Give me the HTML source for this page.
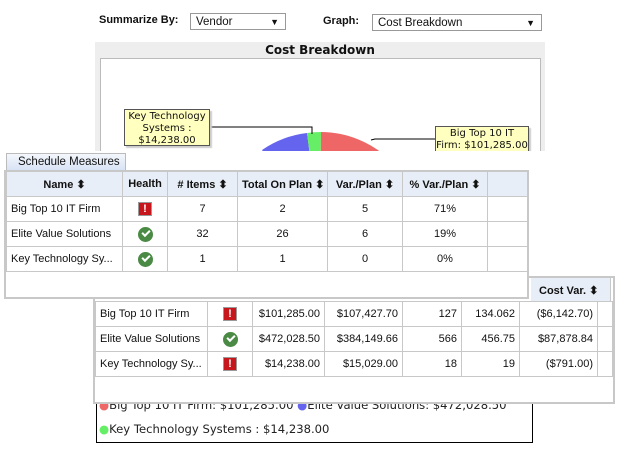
<!DOCTYPE html>
<html><head><meta charset="utf-8"><style>
*{margin:0;padding:0;box-sizing:border-box}
body{width:626px;height:449px;background:#fff;position:relative;overflow:hidden;font-family:"Liberation Sans",Arial,sans-serif;font-size:11px;color:#111}
.a{position:absolute}
.sel{position:absolute;border:1px solid #999;background:#fff;height:17px;font-size:11.5px;padding:1px 5px;line-height:14px}
.sel span{position:absolute;right:6px;top:1px;font-size:9px}
.lbl{position:absolute;font-weight:bold;font-size:11px}
.tip{position:absolute;background:#ffffc0;border:1px solid #555;font-family:"DejaVu Sans",sans-serif;font-size:10px;line-height:12px;text-align:center;box-shadow:2px 2px 1px #ccc}
table{border-collapse:collapse;position:absolute;table-layout:fixed}
td,th{border:1px solid #c8c8c8;height:25px;font-size:11px;white-space:nowrap;overflow:hidden;padding:0 4px}
th{background:#e8eef7;font-weight:bold;text-align:center}
.err{display:inline-block;width:14px;height:14px;background:#c8161d;border:1px solid #999;color:#fff;font-weight:bold;font-size:11px;line-height:12px;text-align:center;vertical-align:middle}
.ok{display:inline-block;width:15px;height:15px;border-radius:50%;background:#4a8a44;vertical-align:middle;position:relative}
.ok:after{content:"";position:absolute;left:4px;top:3px;width:6px;height:3px;border-left:2px solid #fff;border-bottom:2px solid #fff;transform:rotate(-45deg)}
.c{text-align:center}.r{text-align:right}
</style></head><body>
<div class="lbl" style="left:99px;top:14px">Summarize By:</div>
<div class="sel" style="left:190px;top:13px;width:96px">Vendor<span>▼</span></div>
<div class="lbl" style="left:323px;top:15px">Graph:</div>
<div class="sel" style="left:372px;top:14px;width:170px">Cost Breakdown<span>▼</span></div>

<div class="a" style="left:95px;top:42px;width:450px;height:130px;background:#eee"></div>
<div class="a" style="left:95px;top:43px;width:450px;text-align:center;font-family:'DejaVu Sans',sans-serif;font-weight:bold;font-size:12px">Cost Breakdown</div>
<div class="a" style="left:100px;top:58px;width:441px;height:120px;background:#fff;border:1px solid #bbb"></div>
<svg class="a" style="left:0;top:0" width="626" height="449">
<path d="M320 232 L262 150 A100 100 0 0 1 307 133 Z" fill="#6464ee"/>
<path d="M320 232 L307 133 A100 100 0 0 1 321 132 Z" fill="#66ee66"/>
<path d="M320 232 L321 132 A100 100 0 0 1 390 160 Z" fill="#ee6666"/>
<path d="M209 127 H312 V134" stroke="#000" fill="none"/>
<path d="M371 140 L375 139 H435" stroke="#000" fill="none"/>
</svg>
<div class="tip" style="left:124px;top:109px;width:86px;height:37px;padding-top:1px">Key Technology<br>Systems :<br>$14,238.00</div>
<div class="tip" style="left:435px;top:126px;width:94px;height:30px;padding-top:1px">Big Top 10 IT<br>Firm: $101,285.00</div>
<div class="a" style="left:0;top:151px;width:626px;height:130px;background:#fff"></div>

<div class="a" style="left:96px;top:395px;width:437px;height:48px;border:1px solid #000;border-top:none;background:#fff;font-family:'DejaVu Sans',sans-serif;font-size:11.6px;color:#222">
<div style="position:absolute;left:2px;top:3px;white-space:nowrap"><span style="color:#ee6666">●</span>Big Top 10 IT Firm: $101,285.00 <span style="color:#6464ee">●</span>Elite Value Solutions: $472,028.50</div>
<div style="position:absolute;left:2px;top:27px;white-space:nowrap"><span style="color:#66ee66">●</span>Key Technology Systems : $14,238.00</div>
</div>

<!-- back table -->
<div class="a" style="left:93px;top:276px;width:522px;height:128px;border:2px solid #c8c8c8;background:#fff"></div>
<table style="left:95px;top:301px;width:517px">
<colgroup><col style="width:112px"><col style="width:45px"><col style="width:72px"><col style="width:78px"><col style="width:59px"><col style="width:58px"><col style="width:78px"><col style="width:15px"></colgroup>
<tr><td>Big Top 10 IT Firm</td><td class="c"><span class="err">!</span></td><td class="r">$101,285.00</td><td class="r">$107,427.70</td><td class="r">127</td><td class="r">134.062</td><td class="r">($6,142.70)</td><td></td></tr>
<tr><td>Elite Value Solutions</td><td class="c"><span class="ok"></span></td><td class="r">$472,028.50</td><td class="r">$384,149.66</td><td class="r">566</td><td class="r">456.75</td><td class="r">$87,878.84</td><td></td></tr>
<tr><td>Key Technology Sy...</td><td class="c"><span class="err">!</span></td><td class="r">$14,238.00</td><td class="r">$15,029.00</td><td class="r">18</td><td class="r">19</td><td class="r">($791.00)</td><td></td></tr>
</table>
<div class="a" style="left:531px;top:278px;width:80px;height:23px;background:#e8eef7;border-right:1px solid #c8c8c8;font-weight:bold;padding:6px 0 0 8px">Cost Var. ⬍</div>

<!-- front table -->
<div class="a" style="left:6px;top:153px;width:120px;height:18px;border:1px solid #bbb;border-bottom:none;background:linear-gradient(#f4f7fc,#d6e2f5);font-size:11.5px;padding:2px 0 0 11px">Schedule Measures</div>
<div class="a" style="left:4px;top:170px;width:525px;height:129px;border:2px solid #c8c8c8;background:#fff"></div>
<table style="left:6px;top:171px;width:521px">
<colgroup><col style="width:116px"><col style="width:45px"><col style="width:70px"><col style="width:90px"><col style="width:75px"><col style="width:85px"><col style="width:40px"></colgroup>
<tr><th>Name ⬍</th><th>Health</th><th># Items ⬍</th><th>Total On Plan ⬍</th><th>Var./Plan ⬍</th><th>% Var./Plan ⬍</th><th></th></tr>
<tr><td>Big Top 10 IT Firm</td><td class="c"><span class="err">!</span></td><td class="c">7</td><td class="c">2</td><td class="c">5</td><td class="c">71%</td><td></td></tr>
<tr><td>Elite Value Solutions</td><td class="c"><span class="ok"></span></td><td class="c">32</td><td class="c">26</td><td class="c">6</td><td class="c">19%</td><td></td></tr>
<tr><td>Key Technology Sy...</td><td class="c"><span class="ok"></span></td><td class="c">1</td><td class="c">1</td><td class="c">0</td><td class="c">0%</td><td></td></tr>
</table>
</body></html>
